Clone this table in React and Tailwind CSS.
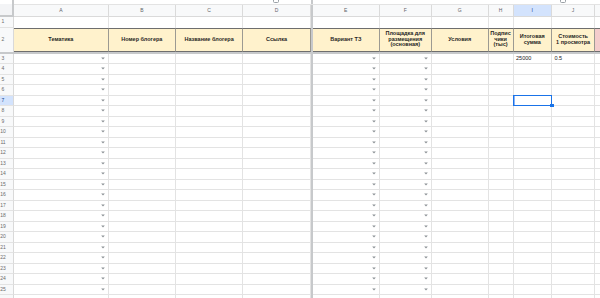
import React from "react";

const COLS = [
  { key: "A", w: "w-[94.7px]", dd: true, head: "Тематика" },
  { key: "B", w: "w-[67.3px]", head: "Номер блогера" },
  { key: "C", w: "w-[67.3px]", head: "Название блогера" },
  { key: "D", w: "w-[67.4px]", head: "Ссылка", icon: true },
  { key: "DIV" },
  { key: "E", w: "w-[66.6px]", dd: true, head: "Вариант ТЗ" },
  { key: "F", w: "w-[52.4px]", dd: true, head: ["Площадка для", "размещения", "(основная)"] },
  { key: "G", w: "w-[56.6px]", head: "Условия" },
  { key: "H", w: "w-[25px]", head: ["Подпис", "чики", "(тыс)"] },
  { key: "I", w: "w-[38.4px]", head: ["Итоговая", "сумма"], sel: true },
  { key: "J", w: "w-[43.3px]", head: ["Стоимость", "1 просмотра"], icon: true },
  { key: "K", w: "w-[40px]", head: "", pink: true, hideLetter: true },
];

function Arrow() {
  return (
    <svg width="4" height="3" viewBox="0 0 4 3" className="block">
      <path d="M0.2 0.6H3.8L2 2.6Z" fill="#8a8f94" />
    </svg>
  );
}

function Divider() {
  return <div className="w-[2.3px] shrink-0 h-full bg-[#c7c9cb]" />;
}

function RowHead({ n, sel, cls = "" }) {
  return (
    <div
      className={`w-[14px] shrink-0 h-full border-r border-[#d9d9d9] flex items-center ${cls} ${
        sel ? "bg-[#d3e3fd] text-[#0b3d91]" : "bg-[#f8f9fa] text-[#6b6b6b]"
      }`}
    >
      <span className="w-[6px] text-center text-[5px] leading-none">{n}</span>
    </div>
  );
}

function DataRow({ n, values = {}, selCol, hideNum }) {
  return (
    <div className="flex h-[10.5px] shrink-0">
      <RowHead n={hideNum ? "" : n} sel={n === 7} cls="border-b border-b-[#e3e3e3]" />
      {COLS.map((c) =>
        c.key === "DIV" ? (
          <Divider key="div" />
        ) : (
          <div
            key={c.key}
            className={`${c.w} shrink-0 h-full border-r border-b border-[#e3e3e3] bg-white relative flex items-center ${
              c.dd ? "justify-end pr-[3px]" : "pl-[2.5px]"
            }`}
          >
            {c.dd && <Arrow />}
            {values[c.key] && (
              <span className="text-[5.5px] leading-none text-[#222]">{values[c.key]}</span>
            )}
          </div>
        )
      )}
    </div>
  );
}

export default function App() {
  const rows = [];
  for (let n = 3; n <= 26; n++) {
    rows.push(
      <DataRow
        key={n}
        n={n}
        hideNum={n === 26}
        values={n === 3 ? { I: "25000", J: "0.5" } : {}}
      />
    );
  }
  return (
    <div className="relative w-[600px] h-[298px] overflow-hidden bg-white font-['Liberation_Sans',Arial,sans-serif] flex flex-col">
      {/* top area: corner + strip + column letters */}
      <div className="flex h-[17px] shrink-0">
        <div className="w-[14px] shrink-0 h-full flex flex-col">
          <div className="h-[4px] bg-white border-r-2 border-[#c7c9cb]" />
          <div className="flex-1 bg-[#f3f4f6] border-r-2 border-b-2 border-[#c7c9cb]" />
        </div>
        <div className="flex-1 flex flex-col">
          <div className="flex h-[5px] shrink-0 border-b border-[#e3e3e3] bg-white">
            {COLS.map((c) =>
              c.key === "DIV" ? (
                <Divider key="div" />
              ) : (
                <div key={c.key} className={`${c.w} shrink-0 h-full relative overflow-visible`}>
                  {c.icon && (
                    <div
                      className={`absolute top-[-3px] w-[6px] h-[6px] rounded-[1.5px] border border-[#9aa0a6] ${
                        c.key === "D" ? "left-[30px]" : "left-[8px]"
                      }`}
                    />
                  )}
                </div>
              )
            )}
          </div>
          <div className="flex h-[12px] shrink-0">
            {COLS.map((c) =>
              c.key === "DIV" ? (
                <Divider key="div" />
              ) : (
                <div
                  key={c.key}
                  className={`${c.w} shrink-0 h-full border-r border-b border-[#dadada] flex items-center justify-center text-[5px] leading-none ${
                    c.sel ? "bg-[#d3e3fd] text-[#0b3d91]" : "bg-[#f8f9fa] text-[#5f6368]"
                  }`}
                >
                  {c.hideLetter ? "" : c.key}
                </div>
              )
            )}
          </div>
        </div>
      </div>

      {/* row 1 */}
      <div className="flex h-[10.5px] shrink-0">
        <RowHead n={1} cls="border-b border-b-[#e3e3e3]" />
        {COLS.map((c) =>
          c.key === "DIV" ? (
            <Divider key="div" />
          ) : (
            <div key={c.key} className={`${c.w} shrink-0 h-full border-r border-[#e3e3e3] bg-white`} />
          )
        )}
      </div>

      {/* row 2 header */}
      <div className="flex h-[24px] shrink-0">
        <RowHead n={2} />
        {COLS.map((c) =>
          c.key === "DIV" ? (
            <Divider key="div" />
          ) : (
            <div
              key={c.key}
              className={`${c.w} shrink-0 h-full border-t border-b border-r border-t-[#6e6e6e] border-b-[#6e6e6e] border-r-[#9c9a92] flex items-center justify-center text-center font-bold text-[5.5px] leading-[5.6px] text-[#1f1f1f] ${
                c.pink ? "bg-[#f4cccc]" : "bg-[#fff2cc]"
              }`}
            >
              {Array.isArray(c.head) ? (
                <span>
                  {c.head.map((l, i) => (
                    <React.Fragment key={i}>
                      {l}
                      {i < c.head.length - 1 && <br />}
                    </React.Fragment>
                  ))}
                </span>
              ) : (
                <span>{c.head}</span>
              )}
            </div>
          )
        )}
      </div>

      {/* frozen row divider */}
      <div className="h-[2px] shrink-0 bg-[#c7c9cb]" />

      {rows}

      {/* selection overlay on I7 */}
      <div className="absolute left-[513.2px] top-[95px] w-[39px] h-[11px] border border-[#1a73e8] z-10">
        <div className="absolute left-0 top-0 bottom-0 w-[1px] bg-[#8ab4f8]" />
      </div>
      <div className="absolute left-[550.2px] top-[103.8px] w-[3.5px] h-[3.5px] bg-[#1a73e8] z-20" />
    </div>
  );
}
